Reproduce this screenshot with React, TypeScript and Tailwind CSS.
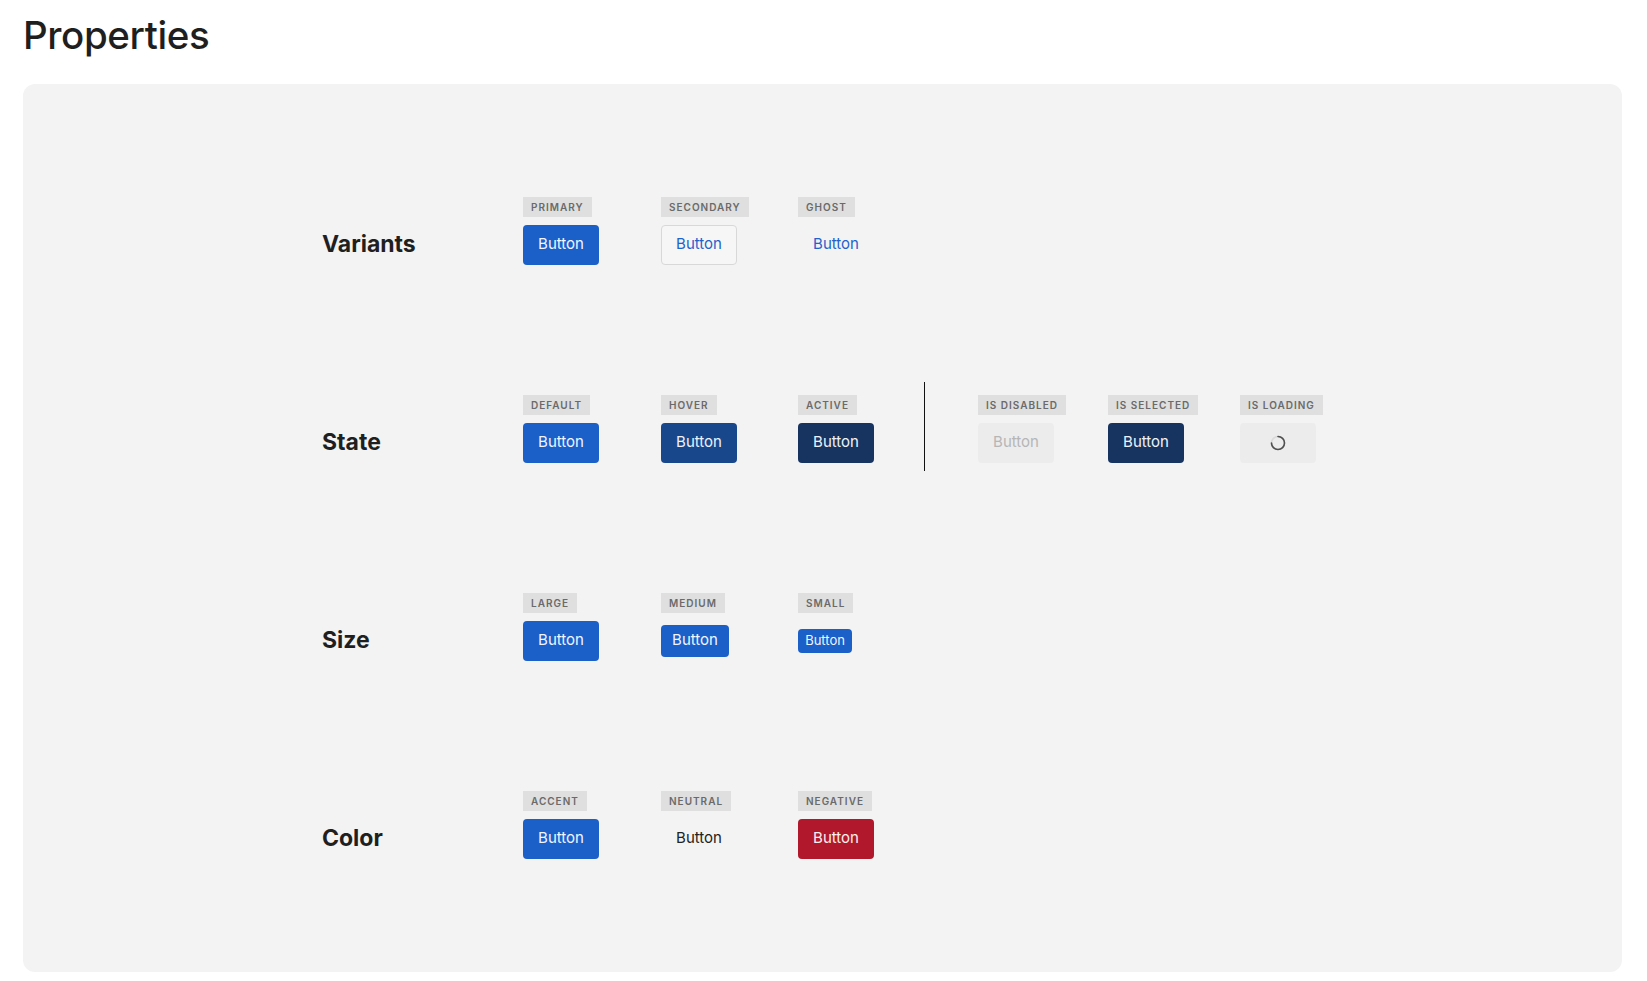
import React from 'react';

type Tone = 'primary' | 'secondary' | 'ghost' | 'hover' | 'active' | 'disabled' | 'selected' | 'loading' | 'neutral' | 'negative';
type Size = 'lg' | 'md' | 'sm';

const toneClass: Record<Tone, string> = {
  primary: 'bg-[#1b5fc9] text-[#f1f5fc]',
  secondary: 'bg-[#f6f6f6] text-[#1e62cb] border border-[#d8d8d8]',
  ghost: 'text-[#1e62cb]',
  hover: 'bg-[#19478b] text-[#eef2f8]',
  active: 'bg-[#173461] text-[#eef2f8]',
  disabled: 'bg-[#ececec] text-[#b6b6b6]',
  selected: 'bg-[#173461] text-[#eef2f8]',
  loading: 'bg-[#ececec] text-[#555555]',
  neutral: 'text-[#222222]',
  negative: 'bg-[#b2182b] text-[#fbeff0]',
};

const sizeClass: Record<Size, string> = {
  lg: 'w-[76px] h-[40px] text-[15px]',
  md: 'w-[68px] h-[32px] text-[15px]',
  sm: 'w-[54px] h-[24px] text-[13px]',
};

const Spinner = () => (
  <svg width="16" height="16" viewBox="0 0 16 16" fill="none">
    <circle cx="8" cy="8" r="6.5" stroke="#dadada" strokeWidth="1.6" />
    <path d="M8 1.5 A6.5 6.5 0 1 1 1.5 8" stroke="#4f4f4f" strokeWidth="1.6" strokeLinecap="round" />
  </svg>
);

interface DemoButtonProps {
  tone: Tone;
  size?: Size;
}

const DemoButton: React.FC<DemoButtonProps> = ({ tone, size = 'lg' }) => (
  <div className={`flex items-center justify-center rounded-[4px] ${toneClass[tone]} ${sizeClass[size]}`}>
    {tone === 'loading' ? <Spinner /> : 'Button'}
  </div>
);

interface SampleProps {
  label: string;
  tone: Tone;
  size?: Size;
  width: string;
}

// one labelled example: grey chip on top, button underneath
const Sample: React.FC<SampleProps> = ({ label, tone, size, width }) => (
  <div className={`flex flex-col items-start gap-[7px] ${width}`}>
    <span className="flex h-[20px] items-center bg-[#dfdfdf] px-[8px] text-[10px] font-semibold tracking-[0.1em] text-[#6a6a6a]">
      {label}
    </span>
    <div className="flex h-[41px] items-center">
      <DemoButton tone={tone} size={size} />
    </div>
  </div>
);

const RowLabel = ({ children }: { children: React.ReactNode }) => (
  <div className="flex h-[68px] w-[201px] shrink-0 items-end">
    <div className="flex h-[41px] items-center text-[23px] font-bold text-[#1f1f1f]">{children}</div>
  </div>
);

export default function App() {
  return (
    <div className="min-h-screen bg-white pr-[25px] pl-[23px] pb-[9px] font-['Inter',sans-serif]">
      <h1 className="pt-[12px] text-[38.5px] leading-[46px] font-medium tracking-[-0.01em] text-[#1f1f1f]">Properties</h1>

      <section className="mt-[26px] flex h-[888px] flex-col gap-[130px] rounded-[12px] bg-[#f3f3f3] pt-[113px] pl-[299px]">
        <div className="flex h-[68px]">
          <RowLabel>Variants</RowLabel>
          <Sample label="PRIMARY" tone="primary" width="w-[138px]" />
          <Sample label="SECONDARY" tone="secondary" width="w-[137px]" />
          <Sample label="GHOST" tone="ghost" width="w-[126px]" />
        </div>

        <div className="flex h-[68px]">
          <RowLabel>State</RowLabel>
          <Sample label="DEFAULT" tone="primary" width="w-[138px]" />
          <Sample label="HOVER" tone="hover" width="w-[137px]" />
          <Sample label="ACTIVE" tone="active" width="w-[126px]" />
          <div className="mt-[-13px] h-[89px] w-px bg-[#111111]" />
          <div className="w-[53px]" />
          <Sample label="IS DISABLED" tone="disabled" width="w-[130px]" />
          <Sample label="IS SELECTED" tone="selected" width="w-[132px]" />
          <Sample label="IS LOADING" tone="loading" width="w-[132px]" />
        </div>

        <div className="flex h-[68px]">
          <RowLabel>Size</RowLabel>
          <Sample label="LARGE" tone="primary" size="lg" width="w-[138px]" />
          <Sample label="MEDIUM" tone="primary" size="md" width="w-[137px]" />
          <Sample label="SMALL" tone="primary" size="sm" width="w-[126px]" />
        </div>

        <div className="flex h-[68px]">
          <RowLabel>Color</RowLabel>
          <Sample label="ACCENT" tone="primary" width="w-[138px]" />
          <Sample label="NEUTRAL" tone="neutral" width="w-[137px]" />
          <Sample label="NEGATIVE" tone="negative" width="w-[126px]" />
        </div>
      </section>
    </div>
  );
}
